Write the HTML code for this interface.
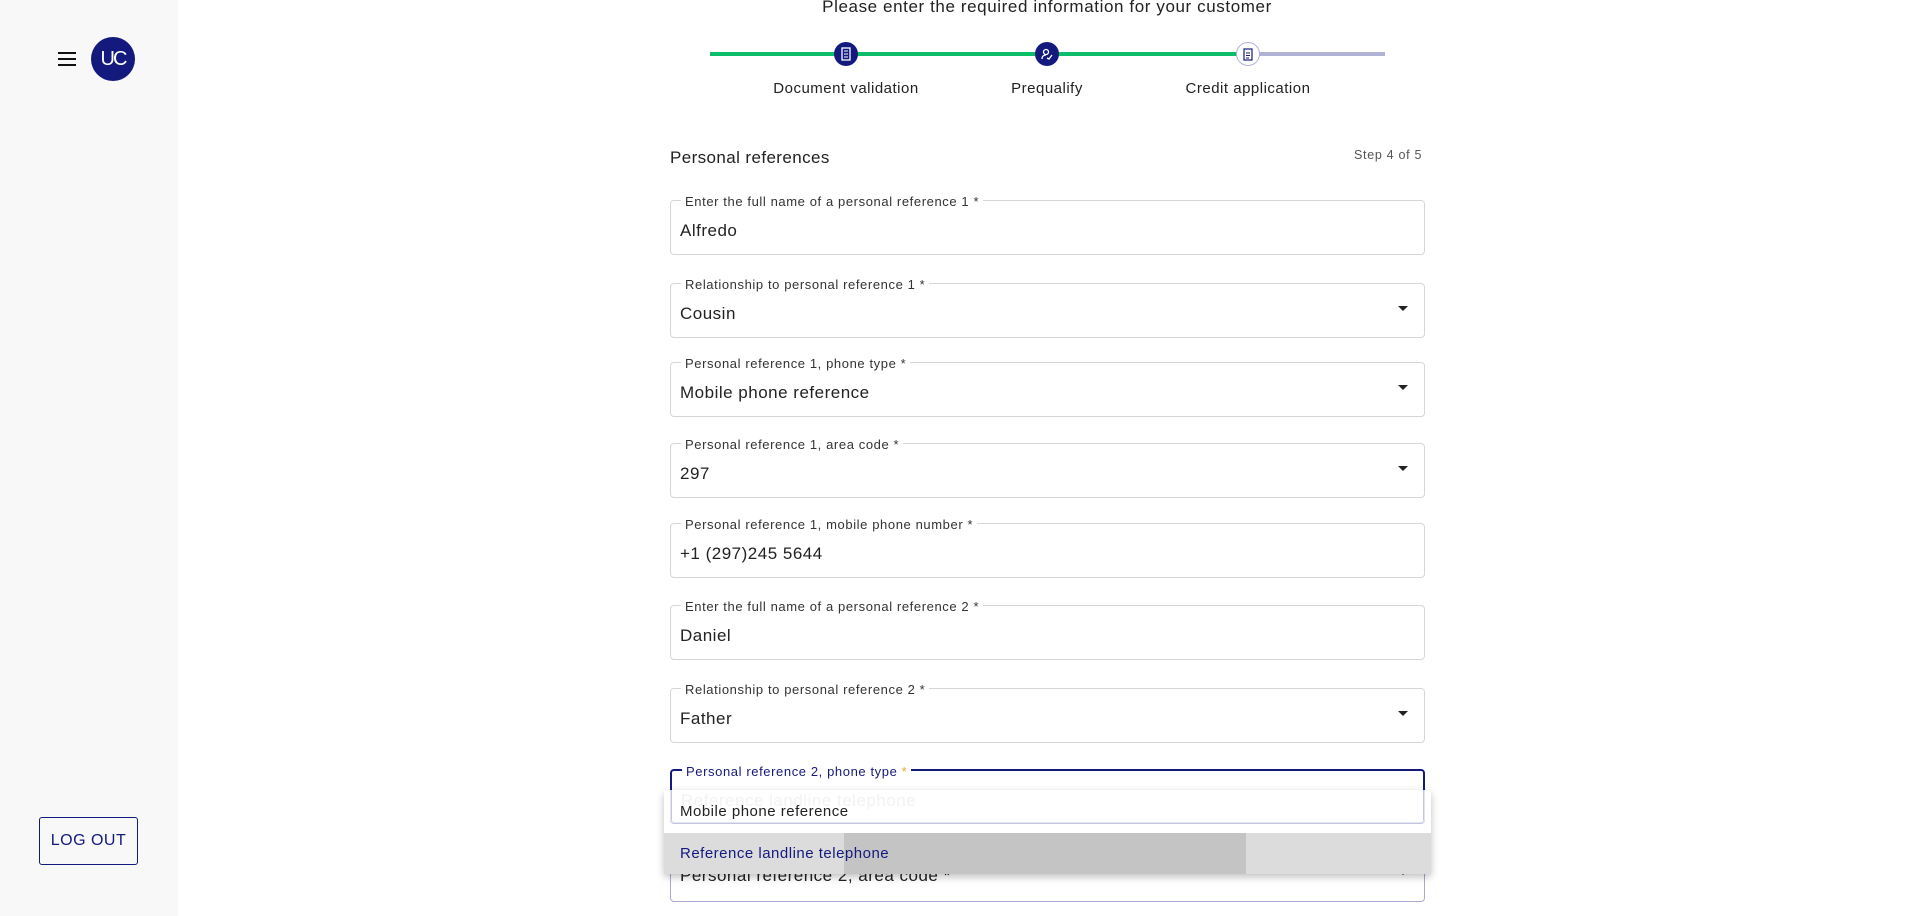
<!DOCTYPE html>
<html><head><meta charset="utf-8"><style>
*{box-sizing:border-box;margin:0;padding:0}
body{width:1920px;height:916px;overflow:hidden;background:#fff;font-family:"Liberation Sans",sans-serif;color:#222;position:relative}
.side{position:absolute;left:0;top:0;width:178px;height:916px;background:#f8f8f8}
.ham{position:absolute;left:58px;top:52px;width:18px}
.ham i{display:block;height:2px;background:#111;margin-bottom:4px}
.av{position:absolute;left:91px;top:37px;width:44px;height:44px;border-radius:50%;background:#141a7d;color:#fff;font-size:20px;text-align:center;line-height:44px;letter-spacing:-2px}
.logout{position:absolute;left:39px;top:817px;width:99px;height:48px;border:1px solid #141a7d;border-radius:3px;color:#141a7d;font-size:16px;text-align:center;line-height:46px;letter-spacing:.5px}
.title{position:absolute;left:0;width:2094px;text-align:center;top:-3px;font-size:17px;letter-spacing:.6px}
.line{position:absolute;top:52px;height:4px}
.dot{position:absolute;top:42px;width:24px;height:24px;border-radius:50%;background:#141a7d}
.dot.l{background:#fff;border:1px solid #b0b3d6}
.lbl{position:absolute;top:80px;font-size:15px;letter-spacing:.5px;width:200px;text-align:center}
.h{position:absolute;left:670px;top:148px;font-size:17px;letter-spacing:.4px}
.step{position:absolute;left:1354px;top:148px;font-size:12.5px;color:#555;letter-spacing:.7px}
.f{position:absolute;left:670px;width:755px;height:55px;border:1px solid #d6d6d6;border-radius:4px}
.f .fl{position:absolute;left:10px;top:-6px;background:#fff;padding:0 4px;font-size:13px;color:#333;letter-spacing:.6px;line-height:13px}
.f .v{position:absolute;left:9px;top:20px;font-size:17px;letter-spacing:.5px}
.f .ar{position:absolute;right:16px;top:22px;border-left:5px solid transparent;border-right:5px solid transparent;border-top:5px solid #222}
.menu{position:absolute;left:664px;top:790px;width:767px;height:84px;box-shadow:0 3px 8px rgba(0,0,0,.25);border-radius:3px;background:rgba(255,255,255,.75)}
</style></head><body>
<div class="side"><div class="ham"><i></i><i></i><i></i></div><div class="av">UC</div><div class="logout">LOG OUT</div></div>
<div class="title">Please enter the required information for your customer</div>
<div class="line" style="left:710px;width:538px;background:#0dbd6a"></div>
<div class="line" style="left:1248px;width:137px;background:#b0b3d6"></div>
<div class="dot" style="left:834px"></div><div class="dot" style="left:1035px"></div><div class="dot l" style="left:1236px"></div>
<svg style="position:absolute;left:840px;top:47px" width="12" height="14"><rect x="2" y="1" width="8" height="12" fill="none" stroke="#fff" stroke-width="1.3"/><path d="M4 4h4M4 7h4M4 10h4" stroke="#fff"/></svg>
<svg style="position:absolute;left:1041px;top:48px" width="12" height="12"><circle cx="5" cy="4" r="2.5" fill="none" stroke="#fff" stroke-width="1.3"/><path d="M1 11c0-3 2-4 4-4M6 10l2 1 3-4" stroke="#fff" fill="none" stroke-width="1.3"/></svg>
<svg style="position:absolute;left:1242px;top:47px" width="12" height="14"><rect x="2" y="2" width="8" height="11" fill="none" stroke="#141a7d" stroke-width="1.2"/><path d="M4 6h4M4 8.5h4M4 11h3" stroke="#141a7d"/></svg>
<div class="lbl" style="left:746px">Document validation</div>
<div class="lbl" style="left:947px">Prequalify</div>
<div class="lbl" style="left:1148px">Credit application</div>
<div class="h">Personal references</div><div class="step">Step 4 of 5</div>
<div class="f" style="top:200px"><span class="fl">Enter the full name of a personal reference 1 *</span><span class="v">Alfredo</span></div>
<div class="f" style="top:283px"><span class="fl">Relationship to personal reference 1 *</span><span class="v">Cousin</span><span class="ar"></span></div>
<div class="f" style="top:362px"><span class="fl">Personal reference 1, phone type *</span><span class="v">Mobile phone reference</span><span class="ar"></span></div>
<div class="f" style="top:443px"><span class="fl">Personal reference 1, area code *</span><span class="v">297</span><span class="ar"></span></div>
<div class="f" style="top:523px"><span class="fl">Personal reference 1, mobile phone number *</span><span class="v">+1 (297)245 5644</span></div>
<div class="f" style="top:605px"><span class="fl">Enter the full name of a personal reference 2 *</span><span class="v">Daniel</span></div>
<div class="f" style="top:688px"><span class="fl">Relationship to personal reference 2 *</span><span class="v">Father</span><span class="ar"></span></div>
<div class="f" style="top:847px;border-color:#a7aad3"><span class="v" style="top:18px">Personal reference 2, area code *</span><span class="ar"></span></div>
<div class="f" style="top:769px;border:2px solid #141a7d"><span class="fl" style="color:#141a7d">Personal reference 2, phone type <span style="color:#f0a030">*</span></span><span class="v" style="color:#ccc">Reference landline telephone</span></div>
<div class="menu">
<div style="position:absolute;left:6px;top:0;width:755px;height:33px;border:1px solid #e4e4f0;border-top:0;border-radius:0 0 4px 4px"></div>
<div style="position:absolute;left:16px;top:13px;font-size:15px;letter-spacing:.5px">Mobile phone reference</div>
<div style="position:absolute;left:0;top:43px;width:767px;height:41px;background:#dcdcdc"></div>
<div style="position:absolute;left:180px;top:43px;width:402px;height:41px;background:#c4c4c4"></div>
<div style="position:absolute;left:16px;top:55px;font-size:15px;color:#141a7d;letter-spacing:.5px">Reference landline telephone</div>
</div>
</body></html>
